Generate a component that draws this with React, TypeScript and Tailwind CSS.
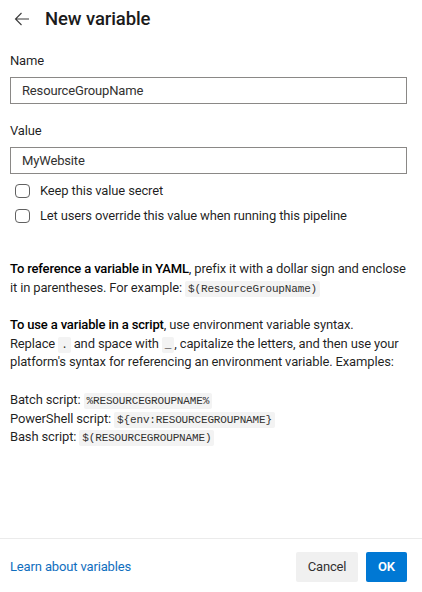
const Code = ({ children }: { children: React.ReactNode }) => (
  <code className="rounded-[2px] bg-[#f3f3f3] px-[3px] py-[2px] font-['Liberation_Mono','DejaVu_Sans_Mono',monospace] text-[11px] leading-none text-[#323130]">
    {children}
  </code>
);

const Checkbox = ({ label }: { label: string }) => (
  <label className="flex h-[20px] items-center">
    <span className="ml-[5px] mr-[10px] h-[14px] w-[15px] rounded-[4px] border border-[#616161] bg-white" />
    <span>{label}</span>
  </label>
);

export default function App() {
  return (
    <div className="flex h-[592px] w-[422px] flex-col bg-white font-['Roboto','Noto_Sans',sans-serif] text-[13px] leading-[20px] tracking-[-0.15px] text-[rgba(0,0,0,0.88)]">
      {/* Header */}
      <div className="flex h-[38px] items-center">
        <svg className="ml-[14px] mr-[15px]" width="16" height="16" viewBox="0 0 16 16" fill="none">
          <path d="M15 8H1.5M7.5 2L1.5 8l6 6" stroke="#3b3b3b" strokeWidth="1.1" />
        </svg>
        <h1 className="text-[18.5px] font-medium tracking-[-0.1px] text-[#1b1b1b]">New variable</h1>
      </div>

      {/* Form */}
      <div className="flex flex-col pl-[10px] pr-[15px]">
        <div className="mt-[13px]">Name</div>
        <div className="mt-[6px] flex h-[27px] items-center border border-[#8a8886] px-[11px] text-[#323130]">
          ResourceGroupName
        </div>

        <div className="mt-[17px]">Value</div>
        <div className="mt-[6px] flex h-[27px] items-center border border-[#8a8886] px-[11px] text-[#323130]">
          MyWebsite
        </div>

        <div className="mt-[7px] flex flex-col gap-[5px]">
          <Checkbox label="Keep this value secret" />
          <Checkbox label="Let users override this value when running this pipeline" />
        </div>

        <div className="mt-[34px] flex flex-col gap-[19px] whitespace-nowrap leading-[18.6px]">
          <p>
            <span className="font-medium text-black">To reference a variable in YAML</span>, prefix it with a dollar sign and enclose
            <br />
            it in parentheses. For example: <Code>$(ResourceGroupName)</Code>
          </p>

          <p>
            <span className="font-medium text-black">To use a variable in a script</span>, use environment variable syntax.
            <br />
            Replace <Code>.</Code> and space with <Code>_</Code>, capitalize the letters, and then use your
            <br />
            platform's syntax for referencing an environment variable. Examples:
          </p>

          <div>
            <div>
              Batch script: <Code>%RESOURCEGROUPNAME%</Code>
            </div>
            <div>
              PowerShell script: <Code>{"${env:RESOURCEGROUPNAME}"}</Code>
            </div>
            <div>
              Bash script: <Code>$(RESOURCEGROUPNAME)</Code>
            </div>
          </div>
        </div>
      </div>

      {/* Footer */}
      <div className="mt-auto flex h-[54px] items-center justify-between border-t border-[#ebebeb] pl-[10px] pr-[15px] pt-[2px]">
        <a className="text-[#106ebe]" href="#">
          Learn about variables
        </a>
        <div className="flex gap-[8px]">
          <button className="h-[30px] w-[62px] rounded-[2px] bg-[#f0f0f0] text-[#323130]">Cancel</button>
          <button className="h-[30px] w-[41px] rounded-[2px] bg-[#0078d4] font-semibold text-white">OK</button>
        </div>
      </div>
    </div>
  );
}
